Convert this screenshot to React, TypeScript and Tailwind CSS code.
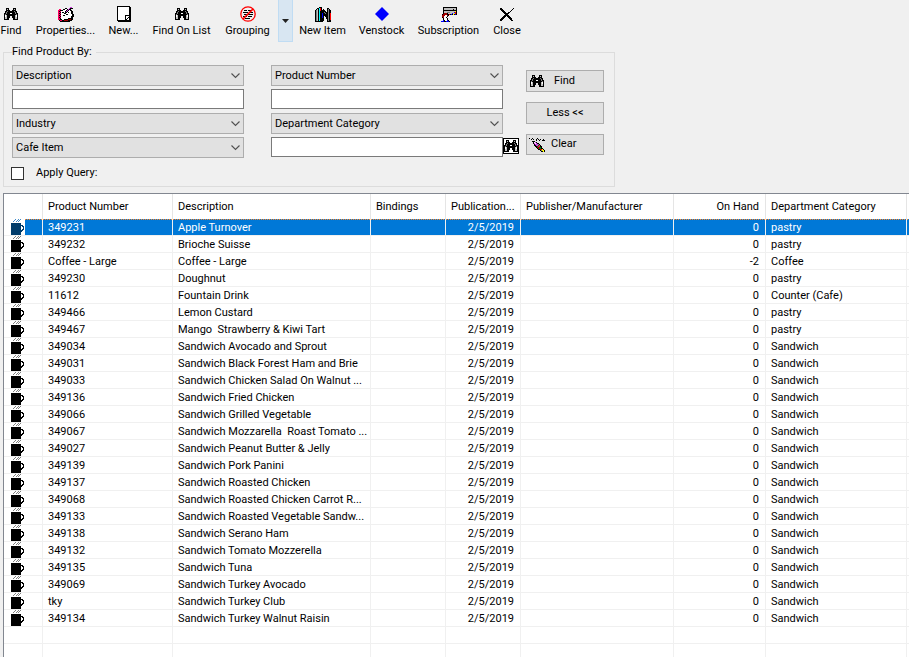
import type { ReactNode } from 'react'

const palette: { [key: string]: string } = {
  k: '#000000',
  w: '#ffffff',
  g: '#808080',
  s: '#c0c0c0',
  r: '#ff0000',
  d: '#a00000',
  m: '#ff0060',
  p: '#d040e0',
  b: '#0000ff',
  c: '#00ffff',
  n: '#008000',
  y: '#ffff00',
}

const binoculars = [
  '..kkk....kkk..',
  '..ksk....ksk..',
  '..kkkk..kkkk..',
  '.kkgkkkkkkgkk.',
  '.kgkkkkkkkkgk.',
  'kkgkkkwwkkkgkk',
  'kgkkkkkkkkkkgk',
  'kwskkkkkkkkswk',
  'kwskkk..kkkswk',
  'ksskkk..kkkssk',
  'ksskk....kkssk',
  'kkkkk....kkkkk',
]

const properties = [
  '............pp..',
  '.......kk..pkkk.',
  '.mm..kkwwkpkk...',
  'mmkkkwwwkpkwkk..',
  'mkmwwwwkpkwwwkk.',
  'mmkwkkwkkwkwwkk.',
  'mkmwwwkkwwwwwkk.',
  'mmkwwwwwkkwwwwkk',
  'mkmwwkkwwwwwwwkk',
  'mmkwwwwwwwwwwkkk',
  'mkmwwwwwwwwwwkk.',
  'mmkwwwwwwwkkkkk.',
  'mmkkwwkkkkdddkk.',
  '.kmmkkddddkkkk..',
  '..kkkkkkkkkk....',
]

const newPage = [
  'kkkkkkkkkkkkk.',
  'kwwwwwwwwwwwkk',
  'kwwwwwwwwwwwkk',
  'kwwwwwwwwwwwkk',
  'kwwwwwwwwwwwkk',
  'kwwwwwwwwwwwkk',
  'kwwwwwwwwwwwkk',
  'kwwwwwwwwwwwkk',
  'kwwwwwwwwwwwkk',
  'kwwwwwwwkkkkkk',
  'kwwwwwwwkwwwkk',
  'kwwwwwwwkwwkkk',
  'kwwwwwwwkwkwkk',
  'kwwwwwwwkkwwkk',
  'kkkkkkkkkkkkkk',
  '.kkkkkkkkkkkkk',
]

const books = [
  '....kkk.........',
  '..kkcrk.....kk..',
  '.kskcrk.k...kgk.',
  'kgskcrkkkk..kgkk',
  'kgskckkkkkk.kgkk',
  'kgskckkkkgkkkgkk',
  'kgskckkbkkgkkgkr',
  'kgskckkbkkkkkgkr',
  'kgskckkbkkkkkgkr',
  'kgskckkbk.kkkgkr',
  'kgskckkbk..kkgkr',
  'kgskckkkk..kkgkr',
  'kgskckkkk...kgkr',
  'kgskckkkk...kgkk',
  'kkkkkkkk....kkkk',
]

const subscription = [
  '..kkkkkkkkkkkkkk',
  '..kssssssssssssk',
  '..kssssssssskssk',
  '..kkkkkkkkkkkkkk',
  '..ksssssssssssyk',
  '..ksssgggssssbrk',
  '..kdddkssssbsyrk',
  '.kddddkkrkbkykbk',
  '.dddwwdk........',
  '.ddwwwk.........',
  '.kdwwk..........',
  '..kwwwk.........',
  '..kwwwk.........',
  '..bkwwbk........',
  'bbbkkbbbk.......',
]

const closeCross = [
  'kk...........k',
  'kkk.........k.',
  '.kkk.......k..',
  '..kkk.....k...',
  '...kkk..kk....',
  '....kkkkk.....',
  '.....kkk......',
  '....kkkkk.....',
  '...kkk.kkk....',
  '..kkk...kkk...',
  '.kkk.....kkk..',
  'kkk.......kk..',
  'kk.........kk.',
]

const eraser = [
  'k..k....k.......',
  '..k.k..k.k.k..k.',
  '.......k..k..kkk',
  '...kkk..........',
  '....kwpk........',
  '....kpwpkk......',
  '.....kpppgk.....',
  '.....kkppnmk....',
  '......kknmmkk...',
  '.......kddnnk...',
  '........kdnnkk..',
  '.........kkdryk.',
  '...........kgyyk',
  '............kkyk',
]

const cup = [
  '....g..g.g....',
  '...g..g.g.....',
  '..g..g.g......',
  '..............',
  'kkkkkkkkkk....',
  'kkkkkkkkkk....',
  'kkkkkkkkkkkk..',
  'kkkkkkkkkk.kk.',
  'kkkkkkkkkk..k.',
  'kkkkkkkkkk..k.',
  'kkkkkkkkkk.kk.',
  'kkkkkkkkkkkk..',
  'kkkkkkkkkkk...',
  'kkkkkkkkkk....',
  'kkkkkkkkkk....',
  'kkkkkkkkkk....',
]

function PixelIcon({ rows, selected = false }: { rows: string[]; selected?: boolean }) {
  const width = rows[0].length
  return (
    <svg width={width} height={rows.length} viewBox={`0 0 ${width} ${rows.length}`} shapeRendering="crispEdges" aria-hidden="true" className="shrink-0">
      {rows.flatMap((row, y) =>
        row.split('').map((cell, x) =>
          cell === '.' ? null : (
            <rect key={`${x}-${y}`} x={x} y={y} width="1" height="1" fill={selected ? (cell === 'k' ? '#003c6b' : '#408ac9') : palette[cell]} />
          )
        )
      )}
    </svg>
  )
}

function GroupingIcon() {
  return (
    <svg width="16" height="16" viewBox="0 0 16 16" aria-hidden="true">
      <path d="M4 4.5h3M8 4.5h4M3 6.5h5M9 6.5h4M4 8.5h3M8 8.5h5M3 10.5h4M8 10.5h4M5 12.5h5" stroke="#000" shapeRendering="crispEdges" />
      <circle cx="8" cy="8" r="7.2" fill="none" stroke="#f00" strokeWidth="1.3" />
      <path d="M3 13L13 3" stroke="#f00" strokeWidth="1.7" />
    </svg>
  )
}

function DiamondIcon() {
  return (
    <svg width="14" height="14" viewBox="0 0 14 14" aria-hidden="true">
      <path d="M7 0L14 7L7 14L0 7Z" fill="#00f" />
    </svg>
  )
}

function ToolButton({ label, icon, width }: { label: string; icon: ReactNode; width: string }) {
  return (
    <button type="button" className={`flex shrink-0 flex-col items-center whitespace-nowrap pt-1.5 ${width}`}>
      <span className="flex h-4 items-center">{icon}</span>
      <span className="leading-[18px]">{label}</span>
    </button>
  )
}

function Dropdown({ label, options }: { label: string; options: string[] }) {
  return (
    <div className="relative h-[21px]">
      <select aria-label={label} defaultValue={options[0]} className="h-full w-full appearance-none border border-[#adadad] bg-[#e1e1e1] pl-[3px] pr-5 pt-px">
        {options.map((option) => (
          <option key={option}>{option}</option>
        ))}
      </select>
      <svg width="9" height="6" viewBox="0 0 9 6" aria-hidden="true" className="pointer-events-none absolute right-1 top-2">
        <path d="M0.5 0.5L4.5 4.5L8.5 0.5" fill="none" stroke="#505050" strokeWidth="1.1" />
      </svg>
    </div>
  )
}

const textBox = 'h-5 w-full border border-[#7a7a7a] bg-white px-1 outline-none'
const pushButton = 'flex w-[78px] items-center border border-[#adadad] bg-[#e1e1e1]'
// solid highlight with the dotted focus line along its top edge
const highlight = 'bg-[#0078d7] bg-[image:repeating-linear-gradient(90deg,#ff8728_0px_1px,#0078d7_1px_2px)] bg-[length:100%_1px] bg-no-repeat'

const products = [
  ['349231', 'Apple Turnover', '0', 'pastry'],
  ['349232', 'Brioche Suisse', '0', 'pastry'],
  ['Coffee - Large', 'Coffee - Large', '-2', 'Coffee'],
  ['349230', 'Doughnut', '0', 'pastry'],
  ['11612', 'Fountain Drink', '0', 'Counter (Cafe)'],
  ['349466', 'Lemon Custard', '0', 'pastry'],
  ['349467', 'Mango  Strawberry & Kiwi Tart', '0', 'pastry'],
  ['349034', 'Sandwich Avocado and Sprout', '0', 'Sandwich'],
  ['349031', 'Sandwich Black Forest Ham and Brie', '0', 'Sandwich'],
  ['349033', 'Sandwich Chicken Salad On Walnut ...', '0', 'Sandwich'],
  ['349136', 'Sandwich Fried Chicken', '0', 'Sandwich'],
  ['349066', 'Sandwich Grilled Vegetable', '0', 'Sandwich'],
  ['349067', 'Sandwich Mozzarella  Roast Tomato ...', '0', 'Sandwich'],
  ['349027', 'Sandwich Peanut Butter & Jelly', '0', 'Sandwich'],
  ['349139', 'Sandwich Pork Panini', '0', 'Sandwich'],
  ['349137', 'Sandwich Roasted Chicken', '0', 'Sandwich'],
  ['349068', 'Sandwich Roasted Chicken Carrot R...', '0', 'Sandwich'],
  ['349133', 'Sandwich Roasted Vegetable Sandw...', '0', 'Sandwich'],
  ['349138', 'Sandwich Serano Ham', '0', 'Sandwich'],
  ['349132', 'Sandwich Tomato Mozzerella', '0', 'Sandwich'],
  ['349135', 'Sandwich Tuna', '0', 'Sandwich'],
  ['349069', 'Sandwich Turkey Avocado', '0', 'Sandwich'],
  ['tky', 'Sandwich Turkey Club', '0', 'Sandwich'],
  ['349134', 'Sandwich Turkey Walnut Raisin', '0', 'Sandwich'],
]

const columns = [
  { title: '', width: 'w-[39px]', right: false },
  { title: 'Product Number', width: 'w-[130px]', right: false },
  { title: 'Description', width: 'w-[198px]', right: false },
  { title: 'Bindings', width: 'w-[75px]', right: false },
  { title: 'Publication...', width: 'w-[75px]', right: true },
  { title: 'Publisher/Manufacturer', width: 'w-[153px]', right: false },
  { title: 'On Hand', width: 'w-[92px]', right: true },
  { title: 'Department Category', width: 'w-[141px]', right: false },
]

function ProductTable() {
  return (
    <table className="w-full table-fixed border-separate border-spacing-0">
      <thead>
        <tr className="h-[25px]">
          {columns.map((column) => (
            <th key={column.title} className={`whitespace-nowrap border-r border-[#e5e5e5] pb-0 pl-[5px] pr-1.5 pt-0.5 font-normal ${column.width} ${column.right ? 'text-right' : 'text-left'}`}>
              {column.title}
            </th>
          ))}
          <th className="p-0" />
        </tr>
      </thead>
      <tbody>
        {products.map(([number, description, onHand, category], index) => {
          const selected = index === 0
          const cells = [number, description, '', '2/5/2019', '', onHand, category]
          return (
            <tr key={number} aria-selected={selected} className={selected ? 'text-white' : ''}>
              <td className="h-[17px] border-b border-r border-[#f0f0f0] p-0">
                <div className="flex h-4 pl-[7px]">
                  <PixelIcon rows={cup} selected={selected} />
                  {selected && <span className={`flex-1 ${highlight}`} />}
                </div>
              </td>
              {cells.map((cell, i) => (
                <td
                  key={i}
                  className={`h-[17px] overflow-hidden whitespace-pre border-b border-r border-[#f0f0f0] p-0 leading-[18px] ${columns[i + 1].right ? 'text-right' : 'text-left'}`}
                >
                  <div className={`h-4 pl-[5px] pr-1.5 ${selected ? highlight : ''}`}>{cell}</div>
                </td>
              ))}
              <td className="border-b border-[#f0f0f0] p-0">
                <div className={`h-4 ${selected ? highlight : ''}`} />
              </td>
            </tr>
          )
        })}
        {[0, 1, 2, 3].map((row) => (
          <tr key={row}>
            {columns.map((column) => (
              <td key={column.title} className="h-[17px] border-b border-r border-[#f0f0f0] p-0" />
            ))}
            <td className="border-b border-[#f0f0f0] p-0" />
          </tr>
        ))}
      </tbody>
    </table>
  )
}

export default function App() {
  return (
    <main className="flex h-screen flex-col overflow-hidden bg-[#f0f0f0] font-['Roboto',sans-serif] text-[11px] text-black">
      <nav aria-label="Toolbar" className="-ml-2 flex h-[42px] shrink-0">
        <ToolButton label="Find" width="w-[38px]" icon={<PixelIcon rows={binoculars} />} />
        <ToolButton label="Properties..." width="w-[71px]" icon={<PixelIcon rows={properties} />} />
        <ToolButton label="New..." width="w-[45px]" icon={<PixelIcon rows={newPage} />} />
        <ToolButton label="Find On List" width="w-[71px]" icon={<PixelIcon rows={binoculars} />} />
        <ToolButton label="Grouping" width="w-[61px]" icon={<GroupingIcon />} />
        <button type="button" aria-label="Grouping options" className="flex w-[15px] items-center justify-center border-x border-b border-[#c0dcf3] bg-[#d8e6f2]">
          <svg width="7" height="4" viewBox="0 0 7 4" aria-hidden="true">
            <path d="M0 0H7L3.5 4Z" fill="#222" />
          </svg>
        </button>
        <ToolButton label="New Item" width="w-[59px]" icon={<PixelIcon rows={books} />} />
        <ToolButton label="Venstock" width="w-[59px]" icon={<DiamondIcon />} />
        <ToolButton label="Subscription" width="w-[75px]" icon={<PixelIcon rows={subscription} />} />
        <ToolButton label="Close" width="w-[42px]" icon={<PixelIcon rows={closeCross} />} />
      </nav>

      <form className="ml-[3px]" onSubmit={(e) => e.preventDefault()}>
        <fieldset className="w-fit border border-[#dcdcdc] px-2 pb-1">
          <legend className="pr-1 leading-5">Find Product By:</legend>
          <div className="flex">
            <div className="grid w-[232px] auto-rows-[24px] items-start pt-[3px]">
              <Dropdown label="First search field" options={['Description', 'Product Number']} />
              <input type="text" aria-label="First search value" className={textBox} />
              <Dropdown label="Industry field" options={['Industry']} />
              <Dropdown label="Industry value" options={['Cafe Item']} />
            </div>
            <div className="ml-[27px] grid w-[232px] auto-rows-[24px] items-start pt-[3px]">
              <Dropdown label="Second search field" options={['Product Number', 'Description']} />
              <input type="text" aria-label="Second search value" className={textBox} />
              <Dropdown label="Category field" options={['Department Category']} />
              <input type="text" aria-label="Department category" className={textBox} />
            </div>
            <button type="button" aria-label="Look up category" className="mb-[7px] flex h-4 w-4 items-center justify-center self-end border border-black bg-white">
              <PixelIcon rows={binoculars} />
            </button>
            <div className="ml-[7px] mr-0.5 flex flex-col gap-2.5 pt-2">
              <button type="submit" className={`${pushButton} h-[22px] gap-2.5 pl-[3px]`}>
                <PixelIcon rows={binoculars} />
                Find
              </button>
              <button type="button" className={`${pushButton} h-[22px] justify-center`}>Less &lt;&lt;</button>
              <button type="reset" className={`${pushButton} h-[21px] gap-1.5 pl-0.5`}>
                <PixelIcon rows={eraser} />
                Clear
              </button>
            </div>
          </div>
          <label className="-ml-px mt-[5px] flex h-4 w-fit items-center gap-3 pb-px">
            <input type="checkbox" className="h-[13px] w-[13px] appearance-none border border-[#333] bg-white checked:bg-[#0078d7]" />
            Apply Query:
          </label>
        </fieldset>
      </form>

      <section aria-label="Products" className="ml-[3px] mt-1.5 min-h-0 flex-1 overflow-hidden border-l border-t border-[#828790] bg-white">
        <ProductTable />
      </section>
    </main>
  )
}
